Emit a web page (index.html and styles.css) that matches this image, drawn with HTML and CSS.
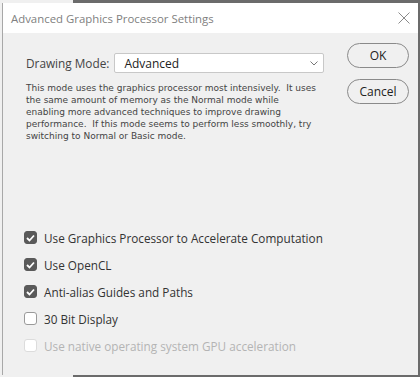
FILE: index.html
```html
<!DOCTYPE html>
<html lang="en">
<head>
    <meta charset="UTF-8">
    <title>Advanced Graphics Processor Settings</title>
    <link rel="stylesheet" href="styles.css">
</head>
<body>
    <div class="strip"><div class="strip-light"></div><div class="strip-dark"></div></div>
    <div class="frame">
        <div class="dialog">
            <div class="titlebar">
                <span class="title">Advanced Graphics Processor Settings</span>
                <svg class="close" width="12" height="12" viewBox="0 0 12 12">
                    <path d="M0.5 0.5 L11.5 11.5 M11.5 0.5 L0.5 11.5" stroke="#8a8a8a" stroke-width="1"/>
                </svg>
            </div>
            <div class="content">
                <div class="main-col">
                    <div class="mode-row">
                        <span class="label">Drawing Mode:</span>
                        <div class="select">
                            <span>Advanced</span>
                            <svg width="8" height="5" viewBox="0 0 8 5">
                                <path d="M0.5 0.5 L4 4 L7.5 0.5" fill="none" stroke="#777" stroke-width="1"/>
                            </svg>
                        </div>
                    </div>
                    <p class="desc">This mode uses the graphics processor most intensively.&nbsp; It uses<br>the same amount of memory as the Normal mode while<br>enabling more advanced techniques to improve drawing<br>performance.&nbsp; If this mode seems to perform less smoothly, try<br>switching to Normal or Basic mode.</p>
                </div>
                <div class="buttons">
                    <button class="btn">OK</button>
                    <button class="btn">Cancel</button>
                </div>
            </div>
            <div class="options">
                <label class="opt"><span class="box checked"><svg width="9" height="8" viewBox="0 0 9 8"><path d="M1 4 L3.5 6.5 L8 1.5" fill="none" stroke="#fff" stroke-width="1.8"/></svg></span>Use Graphics Processor to Accelerate Computation</label>
                <label class="opt"><span class="box checked"><svg width="9" height="8" viewBox="0 0 9 8"><path d="M1 4 L3.5 6.5 L8 1.5" fill="none" stroke="#fff" stroke-width="1.8"/></svg></span>Use OpenCL</label>
                <label class="opt"><span class="box checked"><svg width="9" height="8" viewBox="0 0 9 8"><path d="M1 4 L3.5 6.5 L8 1.5" fill="none" stroke="#fff" stroke-width="1.8"/></svg></span>Anti-alias Guides and Paths</label>
                <label class="opt"><span class="box"></span>30 Bit Display</label>
                <label class="opt disabled"><span class="box"></span>Use native operating system GPU acceleration</label>
            </div>
        </div>
        <div class="edge"></div>
    </div>
    <div class="strip bottom"><div class="strip-light"></div><div class="strip-dark"></div></div>
</body>
</html>
```

FILE: styles.css
```css
body {
    margin: 0;
    width: 420px;
    height: 377px;
    overflow: hidden;
    background-color: #f0f0f0;
    font-family: "Open Sans", "Noto Sans", sans-serif;
    color: #333;
}
.strip {
    display: flex;
    height: 3px;
}
.strip.bottom {
    height: 2px;
}
.strip-light {
    width: 73px;
    background-color: #f0f0f0;
}
.strip-dark {
    flex: 1;
    background-color: #6b6b6b;
}
.frame {
    display: flex;
    height: 372px;
}
.dialog {
    flex: 1;
    margin-left: 2px;
    border-left: 1px solid #a8a8a8;
    background-color: #f0f0f0;
    display: flex;
    flex-direction: column;
}
.edge {
    width: 2px;
    background-color: #6b6b6b;
}
.titlebar {
    height: 30px;
    background-color: white;
    display: flex;
    align-items: center;
    justify-content: space-between;
    padding: 0 8px 0 8px;
}
.title {
    font-size: 11.4px;
    color: #808080;
}
.content {
    display: flex;
    justify-content: space-between;
    padding: 10px 9px 0 23px;
}
.main-col {
    width: 300px;
}
.mode-row {
    display: flex;
    align-items: center;
    margin-top: 10px;
}
.label {
    font-size: 11.8px;
    color: #444;
    margin-right: 5px;
}
.select {
    width: 210px;
    height: 20px;
    box-sizing: border-box;
    border: 1px solid #c8c8c8;
    border-radius: 2px;
    background-color: white;
    display: flex;
    align-items: center;
    justify-content: space-between;
    padding: 0 5px 0 9px;
    font-size: 12px;
    color: #222;
}
.desc {
    margin: 9px 0 0 0;
    font-family: "DejaVu Sans", sans-serif;
    font-size: 9px;
    line-height: 12px;
    color: #444;
    white-space: nowrap;
}
.buttons {
    display: flex;
    flex-direction: column;
    gap: 11px;
}
.btn {
    width: 62px;
    height: 25px;
    border: 1px solid #8a8a8a;
    border-radius: 13px;
    background-color: #f0f0f0;
    font-family: "Open Sans", "Noto Sans", sans-serif;
    font-size: 12px;
    color: #222;
    padding: 0;
}
.options {
    margin-top: 86px;
    padding-left: 21px;
    display: flex;
    flex-direction: column;
    gap: 8px;
}
.opt {
    display: flex;
    align-items: center;
    height: 19px;
    font-size: 11.75px;
    color: #333;
}
.box {
    width: 13px;
    height: 13px;
    box-sizing: border-box;
    border: 1px solid #9a9a9a;
    border-radius: 3px;
    background-color: white;
    margin-right: 7px;
    display: flex;
    align-items: center;
    justify-content: center;
}
.box.checked {
    background-color: #5a5a5a;
    border-color: #5a5a5a;
}
.disabled {
    color: #b4b4b4;
}
.disabled .box {
    border-color: #dcdcdc;
}
```
